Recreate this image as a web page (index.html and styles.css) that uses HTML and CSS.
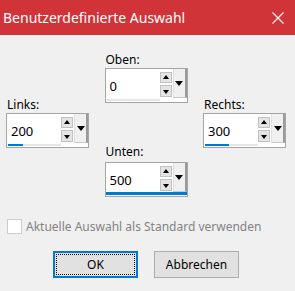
FILE: index.html
```html
<!DOCTYPE html>
<html lang="de">
<head>
    <meta charset="UTF-8">
    <title>Benutzerdefinierte Auswahl</title>
    <link rel="stylesheet" href="styles.css">
</head>
<body>
    <div class="titlebar">
        <span class="title">Benutzerdefinierte Auswahl</span>
        <svg class="close" width="12" height="12" viewBox="0 0 12 12">
            <path d="M0.5 0.5 L11.5 11.5 M11.5 0.5 L0.5 11.5" stroke="#fff" stroke-width="1.1" fill="none"/>
        </svg>
    </div>

    <div class="fields">
        <div class="col col-side">
            <label class="lbl">Links:</label>
            <div class="spin">
                <span class="value">200</span>
                <div class="arrows">
                    <span class="arr arr-up"></span>
                    <span class="arr arr-down"></span>
                </div>
                <div class="drop"><span class="tri"></span></div>
                <div class="track"><div class="fill" style="width: 29%"></div></div>
            </div>
        </div>

        <div class="col col-mid">
            <label class="lbl">Oben:</label>
            <div class="spin">
                <span class="value">0</span>
                <div class="arrows">
                    <span class="arr arr-up"></span>
                    <span class="arr arr-down"></span>
                </div>
                <div class="drop"><span class="tri"></span></div>
                <div class="track track-empty"></div>
            </div>

            <label class="lbl lbl-lower">Unten:</label>
            <div class="spin">
                <span class="value">500</span>
                <div class="arrows">
                    <span class="arr arr-up"></span>
                    <span class="arr arr-down"></span>
                </div>
                <div class="drop"><span class="tri"></span></div>
                <div class="track track-full"></div>
            </div>
        </div>

        <div class="col col-side">
            <label class="lbl">Rechts:</label>
            <div class="spin">
                <span class="value">300</span>
                <div class="arrows">
                    <span class="arr arr-up"></span>
                    <span class="arr arr-down"></span>
                </div>
                <div class="drop"><span class="tri"></span></div>
                <div class="track"><div class="fill" style="width: 45%"></div></div>
            </div>
        </div>
    </div>

    <div class="check-row">
        <span class="checkbox"></span>
        <span class="check-text">Aktuelle Auswahl als Standard verwenden</span>
    </div>

    <div class="buttons">
        <button class="btn btn-default"><span class="focus">OK</span></button>
        <button class="btn">Abbrechen</button>
    </div>
</body>
</html>
```

FILE: styles.css
```css
body {
    margin: 0;
    width: 295px;
    height: 291px;
    background-color: #f0f0f0;
    font-family: "Noto Sans", "Open Sans", sans-serif;
    font-size: 12px;
    color: #000;
    overflow: hidden;
}

.titlebar {
    height: 35px;
    background-color: #d13438;
    display: flex;
    align-items: center;
    justify-content: space-between;
    padding: 0 11px 0 3px;
}
.title {
    color: #fff;
    font-size: 14px;
    margin-top: -1px;
}
.close {
    display: block;
}

.fields {
    display: flex;
    padding: 0 9px 0 6px;
    justify-content: space-between;
}
.col {
    width: 83px;
}
.col-mid {
    padding-top: 16px;
}
.col-side {
    padding-top: 61px;
}

.lbl {
    display: block;
    height: 17px;
    line-height: 17px;
    padding-left: 1px;
}
.lbl-lower {
    margin-top: 40px;
    margin-bottom: 2px;
}

.spin {
    box-sizing: border-box;
    width: 83px;
    height: 35px;
    border: 1px solid #a5a5a5;
    background-color: #fff;
    display: grid;
    grid-template-columns: 1fr 13px 14px;
    grid-template-rows: 29px 4px;
}
.value {
    align-self: center;
    padding-left: 4px;
    padding-top: 4px;
    font-size: 13px;
}
.arrows {
    display: flex;
    flex-direction: column;
    gap: 2px;
    padding-top: 3px;
}
.arr {
    box-sizing: border-box;
    width: 12px;
    height: 11px;
    background-color: #e4e4e4;
    border: 1px solid #c2c2c2;
    position: relative;
}
.arr::after {
    content: "";
    position: absolute;
    left: 2px;
    border-left: 3px solid transparent;
    border-right: 3px solid transparent;
}
.arr-up::after {
    top: 2px;
    border-bottom: 4px solid #000;
}
.arr-down {
    height: 12px;
}
.arr-down::after {
    top: 4px;
    border-top: 4px solid #000;
}

.drop {
    box-sizing: border-box;
    background-color: #f0f0f0;
    border-left: 1px solid #e0e0e0;
    border-right: 2px solid #9a9a9a;
    border-bottom: 1px solid #c8c8c8;
    display: flex;
    align-items: center;
    justify-content: center;
}
.tri {
    width: 0;
    height: 0;
    margin-top: 1px;
    border-left: 4px solid transparent;
    border-right: 4px solid transparent;
    border-top: 5px solid #000;
}

.track {
    grid-column: 1 / 2;
    margin: 1px 0 0 1px;
    height: 2px;
    background-color: #e6e6e6;
}
.fill {
    height: 2px;
    background-color: #0078d7;
}
.track-empty {
    background-color: #e6e6e6;
}
.track-full {
    grid-column: 1 / -1;
    height: 3px;
    margin: 0;
    background-color: #0078d7;
}

.check-row {
    display: flex;
    align-items: center;
    gap: 4px;
    margin: 21px 0 0 7px;
}
.checkbox {
    box-sizing: border-box;
    width: 15px;
    height: 15px;
    border: 1px solid #cccccc;
    background-color: #fff;
}
.check-text {
    color: #838383;
    font-size: 12px;
}

.buttons {
    display: flex;
    gap: 16px;
    padding-left: 53px;
    margin-top: 16px;
}
.btn {
    box-sizing: border-box;
    width: 85px;
    height: 27px;
    padding: 0;
    background-color: #e1e1e1;
    border: 1px solid #adadad;
    font-family: "Noto Sans", "Open Sans", sans-serif;
    font-size: 12px;
    color: #000;
}
.btn-default {
    border: 2px solid #0078d7;
    padding: 1px;
}
.focus {
    display: flex;
    align-items: center;
    justify-content: center;
    height: 100%;
    box-sizing: border-box;
    border: 1px dotted #000;
}
```
